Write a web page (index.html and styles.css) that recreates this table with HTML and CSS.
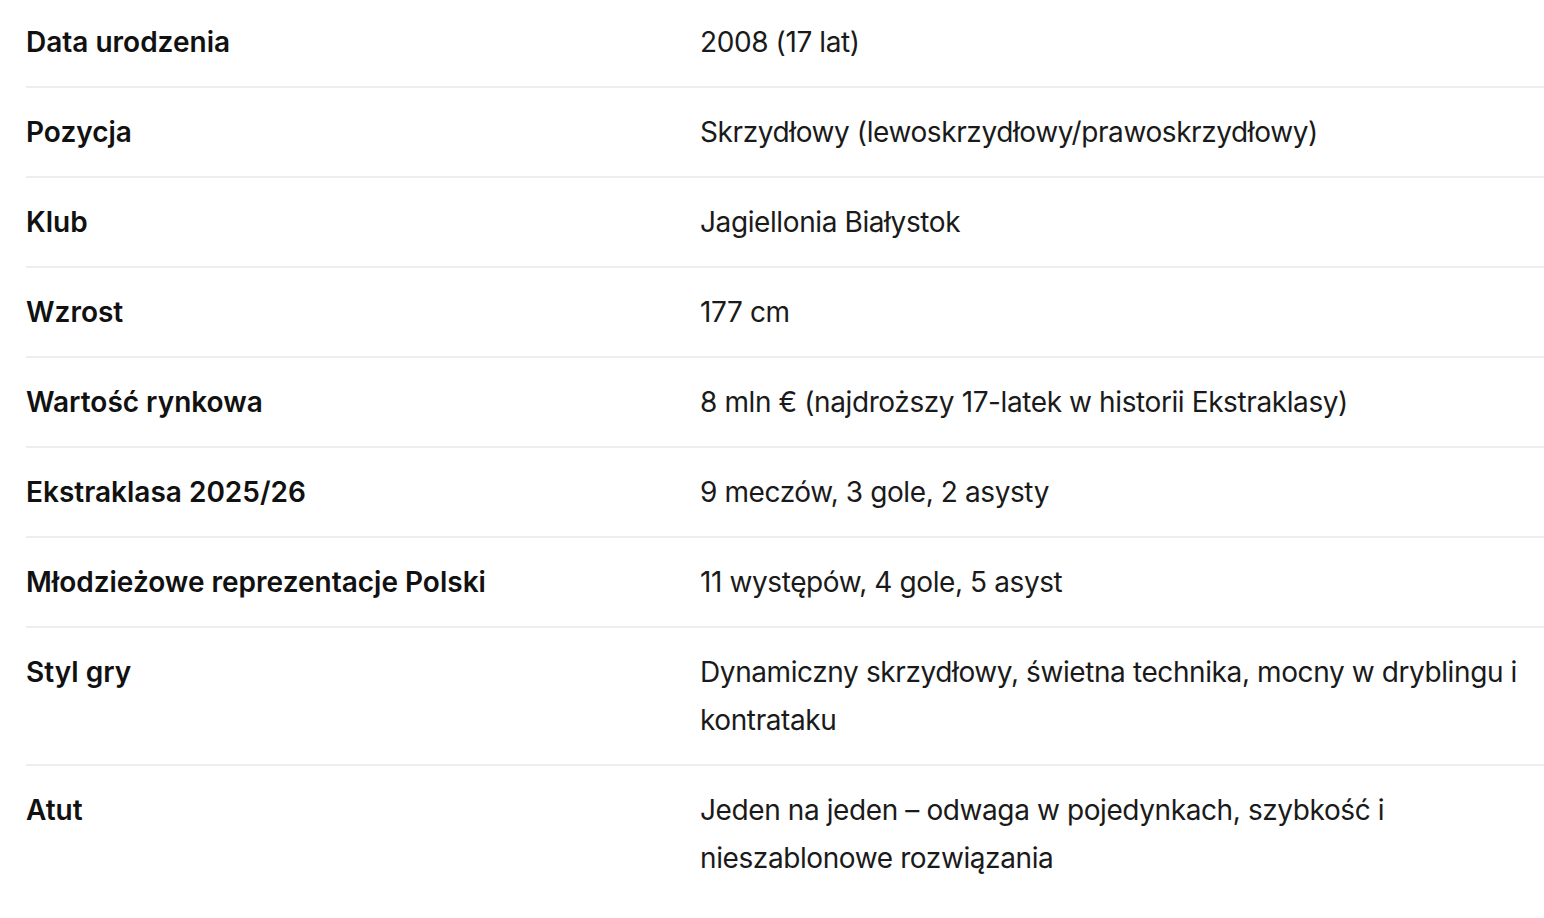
FILE: index.html
```html
<!DOCTYPE html>
<html lang="pl">
<head>
<meta charset="utf-8">
<title>Profil zawodnika</title>
<link rel="stylesheet" href="styles.css">
</head>
<body>
<div class="facts">
  <div class="row"><div class="label">Data urodzenia</div><div class="value">2008 (17 lat)</div></div>
  <div class="row"><div class="label">Pozycja</div><div class="value">Skrzydłowy (lewoskrzydłowy/prawoskrzydłowy)</div></div>
  <div class="row"><div class="label">Klub</div><div class="value">Jagiellonia Białystok</div></div>
  <div class="row"><div class="label">Wzrost</div><div class="value">177 cm</div></div>
  <div class="row"><div class="label">Wartość rynkowa</div><div class="value">8 mln € (najdroższy 17-latek w historii Ekstraklasy)</div></div>
  <div class="row"><div class="label">Ekstraklasa 2025/26</div><div class="value">9 meczów, 3 gole, 2 asysty</div></div>
  <div class="row"><div class="label">Młodzieżowe reprezentacje Polski</div><div class="value">11 występów, 4 gole, 5 asyst</div></div>
  <div class="row"><div class="label">Styl gry</div><div class="value">Dynamiczny skrzydłowy, świetna technika, mocny w dryblingu i kontrataku</div></div>
  <div class="row last"><div class="label">Atut</div><div class="value">Jeden na jeden – odwaga w pojedynkach, szybkość i nieszablonowe rozwiązania</div></div>
</div>
</body>
</html>
```
FILE: styles.css
```css
html, body {
  margin: 0;
  padding: 0;
  background: #ffffff;
}
body {
  font-family: Inter, "Noto Sans", "Liberation Sans", sans-serif;
  font-size: 28px;
  line-height: 48px;
  color: #1a1a1a;
  overflow: hidden;
}
.facts {
  margin: -2px 0 0 26px;
}
.row {
  display: grid;
  grid-template-columns: 674px 1fr;
  padding: 20px 0;
  border-bottom: 2px solid #eeeeee;
}
.row.last {
  border-bottom: none;
}
.label {
  font-weight: 600;
  color: #111111;
}
.value {
  font-weight: 400;
  letter-spacing: -0.4px;
  padding-right: 4px;
}
```
